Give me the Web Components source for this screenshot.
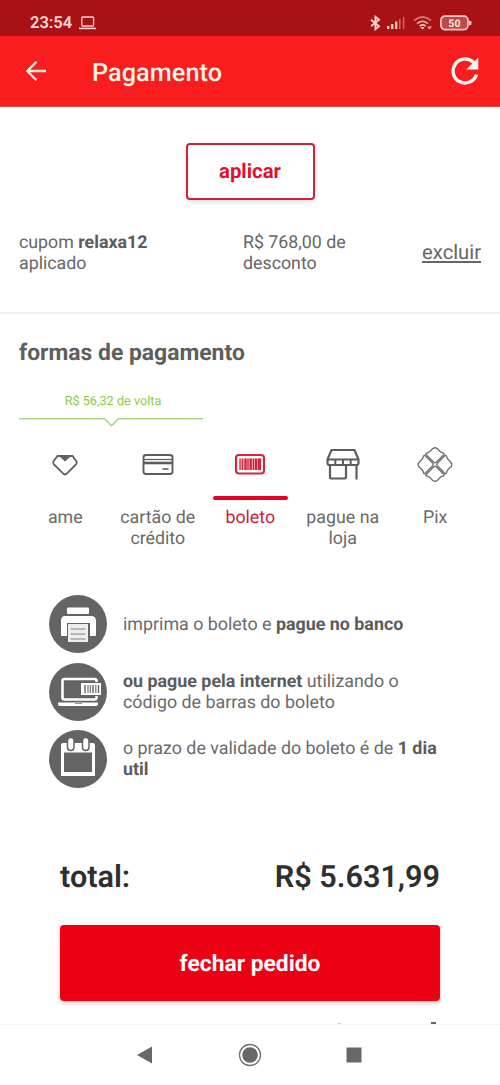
<!DOCTYPE html>
<html lang="pt-BR">
<head>
<meta charset="utf-8">
<title>Pagamento</title>
<style>
html,body{margin:0;height:100%;background:#fff}
body{font-family:Roboto,"Liberation Sans",sans-serif;color:#666;overflow:hidden;text-rendering:geometricPrecision}
</style>
</head>
<body>
<payment-app></payment-app>
<script>
const define=(name,html)=>customElements.define(name,class extends HTMLElement{
  constructor(){super();this.attachShadow({mode:'open'}).innerHTML=html;}
});

define('status-bar',`<style>
:host{display:flex;height:36px;box-sizing:border-box;padding:9px 28px 0 30px;background:#a81214;color:#ffd9d4;align-items:center}
time{font-size:16.500px;font-weight:600;margin:1px 7px 0 0}
.sp{flex:1}
svg{display:block}
.bat{margin-left:7px}
</style>
<time>23:54</time>
<svg width="17" height="14" viewBox="0 0 17 14" fill="none" stroke="#ffd0cb" stroke-width="1.300"><rect x="2.800" y="1" width="11.800" height="9" rx="1"/><path d="M0 12.400h17" stroke-width="1.600"/></svg>
<span class="sp"></span>
<svg width="11" height="16" viewBox="0 0 11 16" fill="none" stroke="#ffd0cb" stroke-width="1.900"><path d="M1 4.800l8 6.500L5.400 14.200V1.800L9 4.700l-8 6.500"/></svg>
<svg width="20" height="14" viewBox="0 0 20 14" style="margin-left:5px"><g fill="#ffc6c0"><rect x="1" y="10" width="2.400" height="3"/><rect x="5" y="8" width="2.400" height="5"/><rect x="9" y="5.500" width="2.400" height="7.500"/></g><g fill="#d2625f"><rect x="13" y="3" width="1.600" height="10"/><rect x="16.800" y="1" width="1.600" height="12"/></g></svg>
<svg width="20" height="16" viewBox="0 0 20 16" fill="none" stroke-width="1.700" style="margin-left:7px"><path d="M1 5.500q8.500-7 17 0" stroke="#d77470"/><path d="M4 8.600q5.500-4.500 11 0" stroke="#eda29d"/><path d="M6.600 11.200q3-2.500 6 0" stroke="#ffd0cb"/><path d="M7.500 12h4l-2 2.800z" fill="#ffd0cb" stroke="none"/><path d="M14 11.500h5l-2.500 3z" fill="#f5aaa4" stroke="none"/></svg>
<svg class="bat" width="32" height="16" viewBox="0 0 32 16"><rect x=".9" y="1.200" width="27" height="13.400" rx="4" fill="#bc4a48" stroke="#ffc6c0" stroke-width="1.700"/><path d="M29 5.500l2.500 1v3L29 10.500z" fill="#ffc6c0"/><text x="14.400" y="11.700" text-anchor="middle" font-size="10.500" font-weight="700" fill="#ffe2dd">50</text></svg>`);

define('app-bar',`<style>
:host{display:flex;height:71px;box-sizing:border-box;align-items:center;padding:0 20px 0 25px;background:#f91d1f;color:#fff5e6;border-bottom:1px solid #df4a48}
h1{margin:5px 0 0;padding-left:45px;font-size:25.200px;font-weight:500;line-height:30px;letter-spacing:.1px;flex:1}
svg{display:block}
</style>
<svg width="22" height="22" viewBox="0 0 22 22" fill="none" stroke="#fff1e2" stroke-width="2.300"><path d="M21 11H2.500M11.500 1.800L2.300 11l9.200 9.200"/></svg>
<h1><slot></slot></h1>
<svg width="30" height="30" viewBox="0 0 30 30"><path d="M26.500 18.500A12 12 0 1 1 24 7" fill="none" stroke="#fff8ee" stroke-width="3.400"/><path d="M28.300 1.500v12H16.300z" fill="#fff8ee"/></svg>`);

define('coupon-panel',`<style>
:host{display:flex;flex-direction:column;align-items:center;height:207px;box-sizing:border-box;padding-top:36px;border-bottom:2px solid #efefef}
button{width:129px;height:57px;border:2px solid #d0203a;border-radius:4px;background:#fff;color:#de1230;font:700 20.300px Roboto,sans-serif;padding:0 0 2px;box-shadow:0 2px 5px #0002;text-rendering:inherit}
.row{display:grid;grid-template-columns:224px 1fr auto;width:462px;margin-top:32px;font-size:17.800px;line-height:21px;align-items:center}
b{font-weight:700;color:#5c5c5c}
a{font-size:20.200px;text-decoration:underline;color:#666;padding-bottom:2px}
</style>
<button>aplicar</button>
<div class="row"><span>cupom <b>relaxa12</b><br>aplicado</span><span>R$ 768,00 de<br>desconto</span><a>excluir</a></div>`);

define('cashback-tip',`<style>
:host{display:block;width:184px;color:#8bcb48;font-size:12.700px;line-height:16px;text-align:center}
span{display:block;padding:1px 0 0 4px}
svg{display:block;margin-top:7px}
</style><span><slot></slot></span>
<svg width="184" height="12" viewBox="0 0 184 12" fill="none" stroke="#a9d781" stroke-width="1.500"><path d="M0 1.700h85.500l7 7 7-7H184"/></svg>`);

define('pay-method',`<style>
:host{display:flex;flex-direction:column;align-items:center;text-align:center;font-size:17.800px;line-height:21px;color:#6a6a6a}
.icon{height:51px;width:75px;display:flex;justify-content:center;align-items:flex-start;position:relative}
:host([selected]){color:#d01c36}
:host([selected]) .icon::after{content:"";position:absolute;left:0;right:0;bottom:-3px;height:4px;border-radius:2px;background:#e60020}
.label{margin-top:10px}
</style><div class="icon"><slot name="icon"></slot></div><div class="label"><slot></slot></div>`);

const petal='<path d="M18.900 16.400l-7-7q-1-1.100.4-1.500 2-.4 3.200-1.700l2.200-2.300q2.300-2 4.600 0l2.200 2.300q1.200 1.300 3.200 1.700 1.400.4.400 1.500l-7 7q-1.100 1-2.200 0z"/>';
define('method-list',`<style>
:host{display:block;height:240px;padding:25px 19px 0;box-sizing:border-box}
h2{margin:0 0 26px;font-size:22.900px;line-height:28px;font-weight:700;color:#5e5e5e}
.grid{display:grid;grid-template-columns:repeat(5,92.500px);margin-top:17px}
svg{display:block}
</style>
<h2>formas de pagamento</h2>
<cashback-tip>R$ 56,32 de volta</cashback-tip>
<div class="grid">
<pay-method><svg slot="icon" width="40" height="36" viewBox="0 0 40 36" fill="none" stroke="#606060" stroke-width="1.800"><path d="M12.500 10h15l4 5.500q.8 1.500-.6 3l-9.400 9.300q-1.500 1.300-3 0L9 18.500q-1.400-1.500-.6-3z"/><path d="M14 10h12l-6 5.600z" fill="#606060" stroke="none"/></svg>ame</pay-method>
<pay-method><svg slot="icon" width="40" height="36" viewBox="0 0 40 36" fill="none" stroke="#5d5d5d" stroke-width="1.900"><rect x="5.500" y="9" width="29" height="19" rx="2.500"/><path d="M5.500 13.500h29" stroke-width="1.200"/><path d="M5.500 17h29" stroke-width="2.600"/><path d="M24.500 23h6" stroke-width="1.600"/></svg>cartão de<br>crédito</pay-method>
<pay-method selected><svg slot="icon" width="40" height="36" viewBox="0 0 40 36" fill="none" stroke="#cf2940"><rect x="6" y="9" width="28" height="18.500" rx="3" stroke-width="2.200"/><path d="M9.500 12.500h21.500v11.500H9.500z" fill="#f3a5b0" stroke="none"/><path d="M10 12.500v11.500M12.500 12.500v11.500M18 12.500v11.500M23.500 12.500v11.500M28.500 12.500v11.500" stroke-width="1.200"/><path d="M15.500 12.500v11.500M20.700 12.500v11.500M26 12.500v11.500M30 12.500v11.500" stroke-width="2.200"/></svg>boleto</pay-method>
<pay-method><svg slot="icon" width="40" height="36" viewBox="0 0 40 36" fill="none" stroke="#5d5d5d" stroke-width="2.200" stroke-linejoin="round"><path d="M8.500 4h23l4 9.500v3.500q0 2-2 2h-27q-2 0-2-2v-3.500z"/><path d="M4.500 13.500h31M12.300 13.500v5M20 13.500v5M27.700 13.500v5" stroke-width="2"/><path d="M7 19v12q0 1.500 1.500 1.500H21q2 0 2-1.500V19M33.500 19v14.500"/></svg>pague na<br>loja</pay-method>
<pay-method><svg slot="icon" width="40" height="38" viewBox="0 0 40 38" fill="none" stroke="#727272" stroke-width="1.300"><g transform="translate(20 18.500) scale(1.080) translate(-20 -18.500)">${[0,90,180,270].map(a=>`<g transform="rotate(${a} 20 18.500)">${petal}</g>`).join('')}</g></svg>Pix</pay-method>
</div>`);

define('info-item',`<style>
:host{display:flex;align-items:center;height:58px;gap:16px;font-size:17.850px;line-height:21px;color:#6a6a6a}
.disc{width:58px;height:58px;border-radius:50%;background:#646464;flex:none;overflow:hidden}
.text{white-space:nowrap}
::slotted(b){font-weight:700;color:#5c5c5c}
</style><div class="disc"><slot name="icon"></slot></div><div class="text"><slot></slot></div>`);

define('boleto-info',`<style>
:host{display:flex;flex-direction:column;gap:9.500px;padding:41px 0 0 49px}
svg{display:block}
</style>
<info-item><svg slot="icon" width="58" height="58" viewBox="0 0 58 58"><rect x="18" y="12.500" width="22" height="6.500" rx="1" fill="#fff"/><path d="M16 21h26q5 0 5 5v14q0 1-1 1h-5V28H18v13h-5q-1 0-1-1V26q0-5 4-5z" fill="#fff"/><path d="M19 29h20v18H19z" fill="#eee"/><path d="M21.500 34h15M21.500 39h15M21.500 44h15" stroke="#a5a5a5" stroke-width="1.600"/></svg>imprima o boleto e <b>pague no banco</b></info-item>
<info-item><svg slot="icon" width="58" height="58" viewBox="0 0 58 58"><rect x="13.500" y="16" width="34" height="20.500" rx="2" fill="none" stroke="#fff" stroke-width="2.600"/><path d="M9 39.500h40v1.500q0 2-2 2H11q-2 0-2-2z" fill="#fff"/><path d="M26 40.500h7" stroke="#999" stroke-width="1.200"/><rect x="31.500" y="19.500" width="21" height="13" fill="#fff" stroke="#646464" stroke-width="1"/><path d="M36 22v8M44 22v8M49.500 22v8" stroke="#666" stroke-width="1.400"/><path d="M39 22v8M41.300 22v8M46.800 22v8" stroke="#777" stroke-width="1.200"/></svg><b>ou pague pela internet</b> utilizando o<br>código de barras do boleto</info-item>
<info-item><svg slot="icon" width="58" height="58" viewBox="0 0 58 58"><path d="M12 15q0-2 2-2h30q2 0 2 2v31H12zM15 22.500v19.500h28V22.500z" fill="#fff" fill-rule="evenodd"/><g fill="#fff" stroke="#646464" stroke-width="1.500"><rect x="18.500" y="7.500" width="6.500" height="13" rx="3.200"/><rect x="33.500" y="7.500" width="6.500" height="13" rx="3.200"/></g></svg>o prazo de validade do boleto é de <b>1 dia<br>util</b></info-item>`);

define('order-total',`<style>
:host{display:flex;flex-direction:column;padding:70px 60px 0;color:#2f2f2f}
.sum{display:flex;justify-content:space-between;font-size:30.600px;line-height:36px;font-weight:600;padding-top:2px;margin-bottom:-2px}
button{height:76px;margin-top:31px;border:0;border-radius:4px;background:#ec0014;color:#fff;font:700 22.800px Roboto,sans-serif;box-shadow:0 2px 4px #b0303050;text-rendering:inherit}
</style>
<div class="sum"><span>total:</span><span>R$ 5.631,99</span></div>
<button>fechar pedido</button>`);

define('nav-bar',`<style>
:host{display:grid;height:61px;box-sizing:border-box;border-top:1px solid #f3f3f3;background:#fff;grid-template-columns:93px 104px 106px 102px 95px;align-items:center;justify-items:center}
svg{display:block;grid-row:1}
.back{grid-column:2}.home{grid-column:3}.recent{grid-column:4}
</style>
<svg class="back" width="18" height="20" viewBox="0 0 18 20"><path d="M1 10L16 1.500v17z" fill="#686868"/></svg>
<svg class="home" width="24" height="24" viewBox="0 0 24 24"><circle cx="12" cy="12" r="7.800" fill="#686868"/><circle cx="12" cy="12" r="10.500" fill="none" stroke="#707070" stroke-width="1.300"/></svg>
<svg class="recent" width="16" height="16" viewBox="0 0 16 16"><path d="M.5.500h15v15H.5z" fill="#686868"/></svg>`);

define('payment-app',`<style>
:host{display:flex;flex-direction:column;width:500px;height:1085px;background:#fff}
main{flex:1;min-height:0;overflow:hidden;display:flex;flex-direction:column}
main>*{flex:none}
.peek{flex:1;display:flex;align-items:flex-end;justify-content:flex-end;padding-right:64px;gap:90px}
.peek i{width:3px;height:1px;background:#ccc}
.peek i+i{width:5px;height:2px;background:#666}
</style>
<status-bar></status-bar>
<app-bar>Pagamento</app-bar>
<main><coupon-panel></coupon-panel><method-list></method-list><boleto-info></boleto-info><order-total></order-total><div class="peek"><i></i><i></i></div></main>
<nav-bar></nav-bar>`);
</script>
</body>
</html>
